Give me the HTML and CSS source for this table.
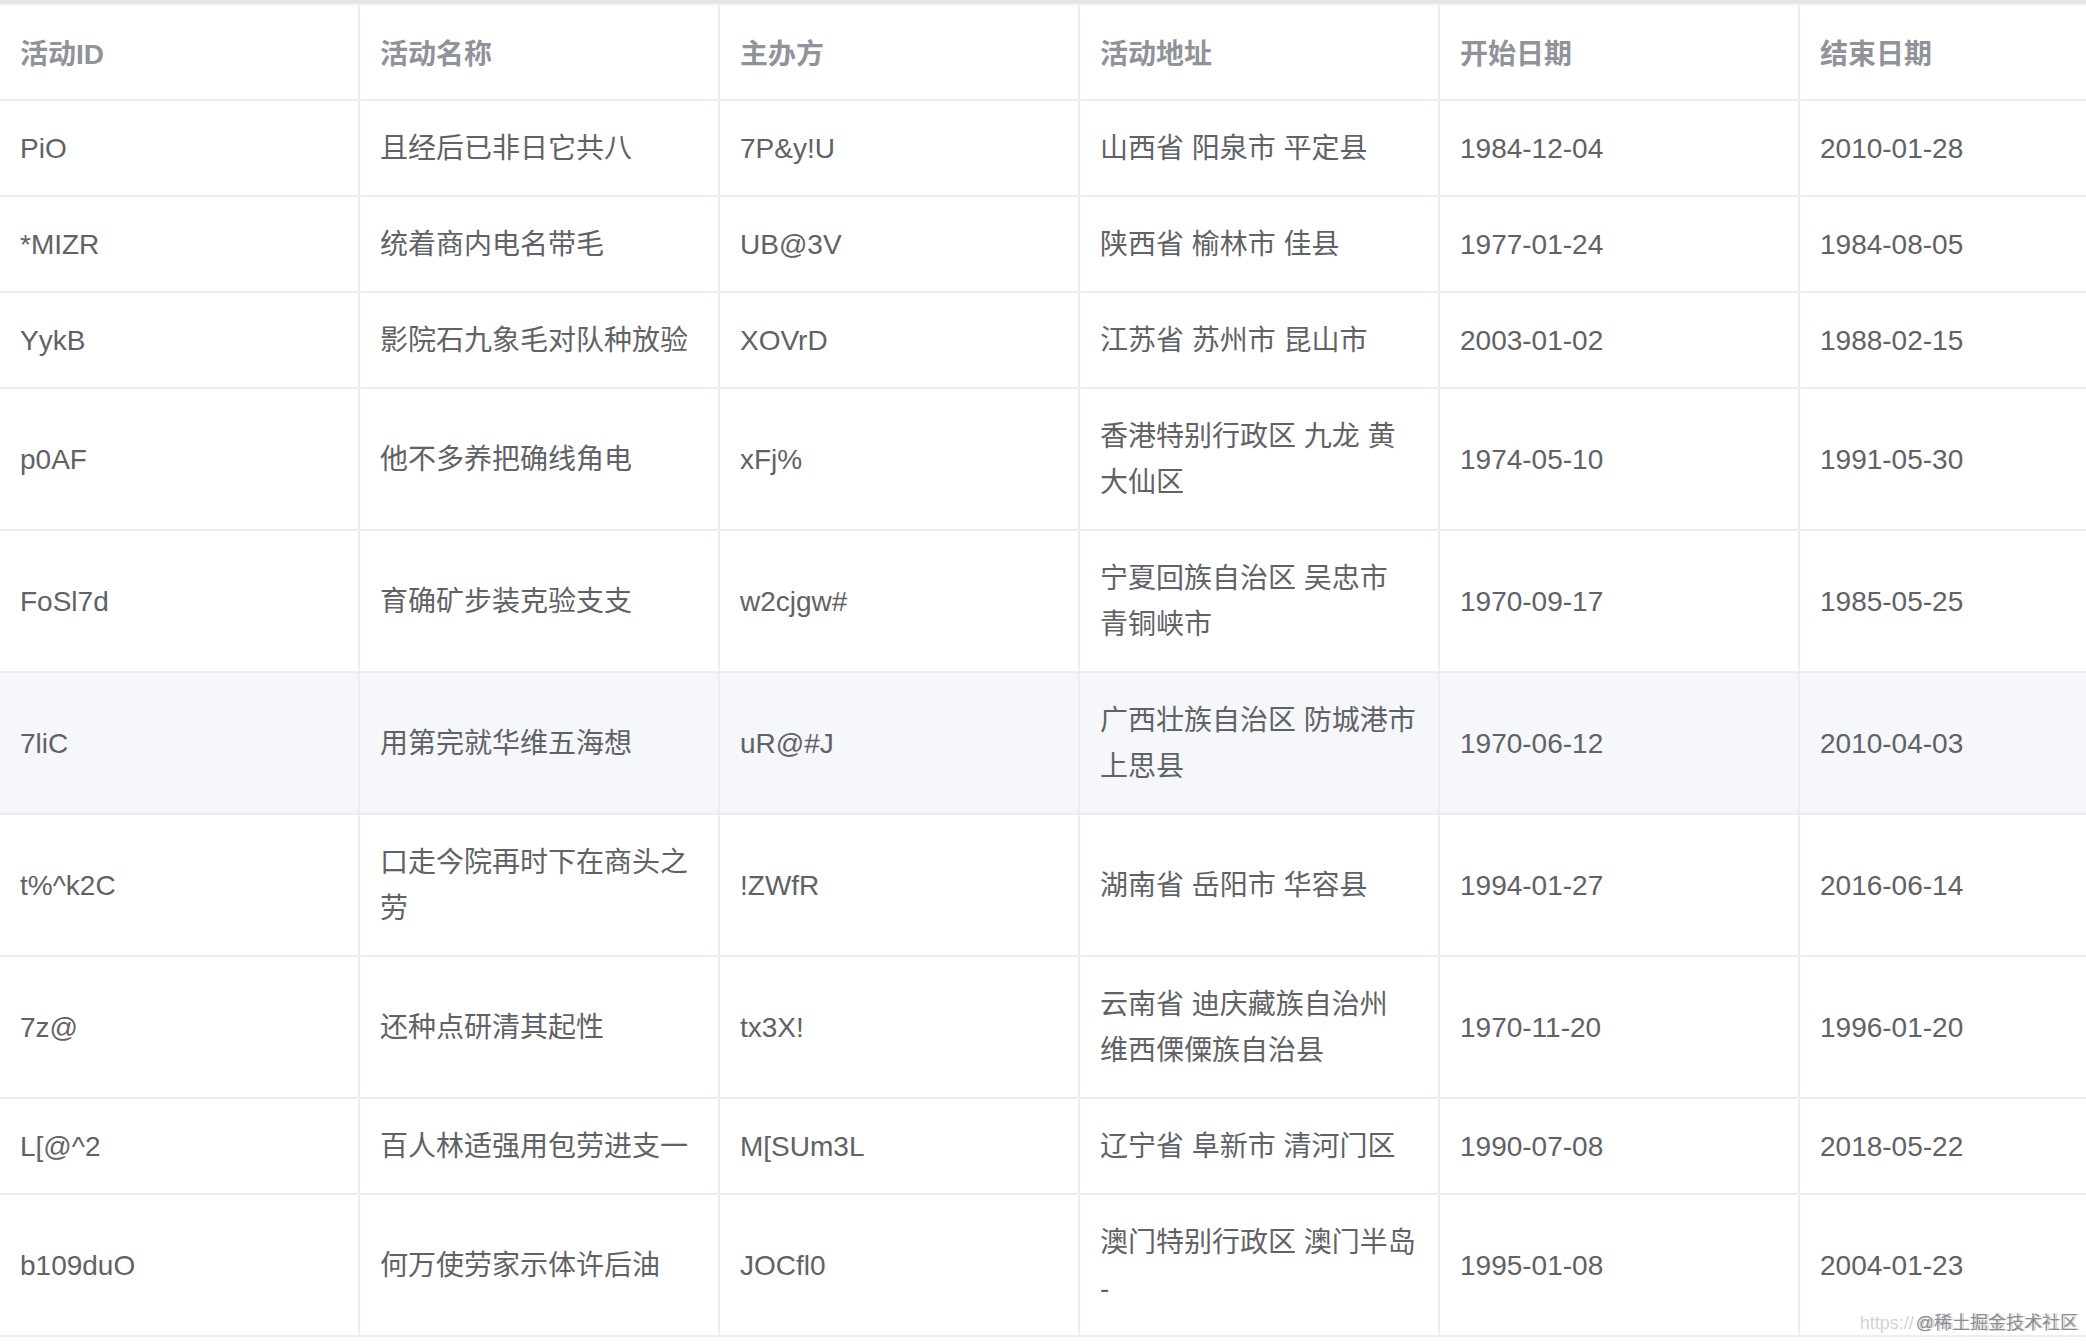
FILE: index.html
```html
<!DOCTYPE html>
<html lang="zh-CN">
<head>
<meta charset="utf-8">
<title>活动列表</title>
<link rel="stylesheet" href="styles.css">
</head>
<body>
<div class="page">
  <div class="topband"></div>
  <div class="table">
    <div class="row head">
      <div class="cell"><span>活动ID</span></div>
      <div class="cell"><span>活动名称</span></div>
      <div class="cell"><span>主办方</span></div>
      <div class="cell"><span>活动地址</span></div>
      <div class="cell"><span>开始日期</span></div>
      <div class="cell"><span>结束日期</span></div>
    </div>
    <div class="row">
      <div class="cell"><span>PiO</span></div>
      <div class="cell"><span>且经后已非日它共八</span></div>
      <div class="cell"><span>7P&amp;y!U</span></div>
      <div class="cell"><span>山西省 阳泉市 平定县</span></div>
      <div class="cell"><span>1984-12-04</span></div>
      <div class="cell"><span>2010-01-28</span></div>
    </div>
    <div class="row">
      <div class="cell"><span>*MIZR</span></div>
      <div class="cell"><span>统着商内电名带毛</span></div>
      <div class="cell"><span>UB@3V</span></div>
      <div class="cell"><span>陕西省 榆林市 佳县</span></div>
      <div class="cell"><span>1977-01-24</span></div>
      <div class="cell"><span>1984-08-05</span></div>
    </div>
    <div class="row">
      <div class="cell"><span>YykB</span></div>
      <div class="cell"><span>影院石九象毛对队种放验</span></div>
      <div class="cell"><span>XOVrD</span></div>
      <div class="cell"><span>江苏省 苏州市 昆山市</span></div>
      <div class="cell"><span>2003-01-02</span></div>
      <div class="cell"><span>1988-02-15</span></div>
    </div>
    <div class="row">
      <div class="cell"><span>p0AF</span></div>
      <div class="cell"><span>他不多养把确线角电</span></div>
      <div class="cell"><span>xFj%</span></div>
      <div class="cell"><span>香港特别行政区 九龙 黄大仙区</span></div>
      <div class="cell"><span>1974-05-10</span></div>
      <div class="cell"><span>1991-05-30</span></div>
    </div>
    <div class="row">
      <div class="cell"><span>FoSl7d</span></div>
      <div class="cell"><span>育确矿步装克验支支</span></div>
      <div class="cell"><span>w2cjgw#</span></div>
      <div class="cell"><span>宁夏回族自治区 吴忠市 青铜峡市</span></div>
      <div class="cell"><span>1970-09-17</span></div>
      <div class="cell"><span>1985-05-25</span></div>
    </div>
    <div class="row hover">
      <div class="cell"><span>7liC</span></div>
      <div class="cell"><span>用第完就华维五海想</span></div>
      <div class="cell"><span>uR@#J</span></div>
      <div class="cell"><span>广西壮族自治区 防城港市 上思县</span></div>
      <div class="cell"><span>1970-06-12</span></div>
      <div class="cell"><span>2010-04-03</span></div>
    </div>
    <div class="row">
      <div class="cell"><span>t%^k2C</span></div>
      <div class="cell"><span>口走今院再时下在商头之劳</span></div>
      <div class="cell"><span>!ZWfR</span></div>
      <div class="cell"><span>湖南省 岳阳市 华容县</span></div>
      <div class="cell"><span>1994-01-27</span></div>
      <div class="cell"><span>2016-06-14</span></div>
    </div>
    <div class="row">
      <div class="cell"><span>7z@</span></div>
      <div class="cell"><span>还种点研清其起性</span></div>
      <div class="cell"><span>tx3X!</span></div>
      <div class="cell"><span>云南省 迪庆藏族自治州 维西傈僳族自治县</span></div>
      <div class="cell"><span>1970-11-20</span></div>
      <div class="cell"><span>1996-01-20</span></div>
    </div>
    <div class="row">
      <div class="cell"><span>L[@^2</span></div>
      <div class="cell"><span>百人林适强用包劳进支一</span></div>
      <div class="cell"><span>M[SUm3L</span></div>
      <div class="cell"><span>辽宁省 阜新市 清河门区</span></div>
      <div class="cell"><span>1990-07-08</span></div>
      <div class="cell"><span>2018-05-22</span></div>
    </div>
    <div class="row">
      <div class="cell"><span>b109duO</span></div>
      <div class="cell"><span>何万使劳家示体许后油</span></div>
      <div class="cell"><span>JOCfl0</span></div>
      <div class="cell"><span>澳门特别行政区 澳门半岛 -</span></div>
      <div class="cell"><span>1995-01-08</span></div>
      <div class="cell"><span>2004-01-23</span></div>
    </div>
  </div>
  <div class="watermark"><span class="wm-url">https://</span><span class="wm-tag">@稀土掘金技术社区</span></div>
</div>
</body>
</html>
```

FILE: styles.css
```css
html, body {
  margin: 0;
  padding: 0;
  background: #ffffff;
  overflow: hidden;
}

.page {
  position: relative;
  width: 2086px;
  height: 1344px;
  font-family: "Liberation Sans", "Noto Sans CJK SC", sans-serif;
  font-size: 28px;
  color: #606266;
}

.topband {
  height: 3px;
  background: #e4e4e4;
}

.table {
  border-top: 2px solid #ebeef5;
}

.row {
  display: grid;
  grid-template-columns: repeat(5, 360px) 1fr;
}

.row.hover {
  background: #f5f7fa;
}

.cell {
  box-sizing: border-box;
  display: flex;
  align-items: center;
  padding: 25px 20px 23px;
  line-height: 46px;
  border-right: 2px solid #ebeef5;
  border-bottom: 2px solid #ebeef5;
}

.cell:last-child {
  border-right: none;
}

.cell span {
  display: block;
  min-width: 0;
}

.head .cell {
  color: #909399;
  font-weight: 700;
  padding-top: 27px;
  padding-bottom: 21px;
}

.watermark {
  position: absolute;
  right: 8px;
  top: 1313px;
  height: 21px;
  font-size: 18px;
  line-height: 21px;
  white-space: nowrap;
  display: flex;
  gap: 2px;
}

.wm-url {
  color: #d2d2d5;
}

.wm-tag {
  color: #8c8c91;
  text-shadow: 2px 0 0 rgba(150, 150, 155, 0.4);
}
```
